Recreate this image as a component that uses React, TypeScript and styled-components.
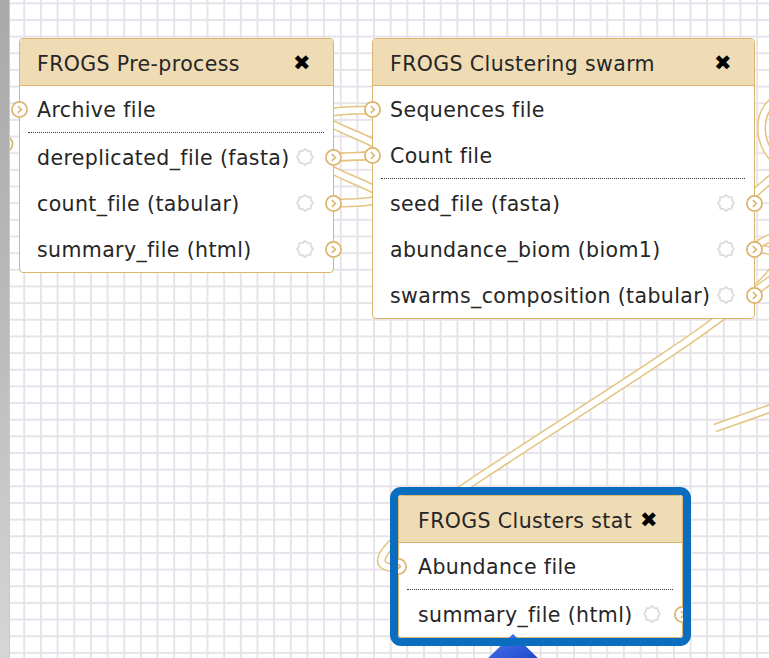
import React from "react";
import styled, { createGlobalStyle } from "styled-components";

const GlobalStyle = createGlobalStyle`
  html, body {
    margin: 0;
    padding: 0;
  }
  body {
    font-family: "DejaVu Sans", Verdana, sans-serif;
    overflow: hidden;
    background: #fff;
  }
`;

const TAN = "#dcb56c";
const WIRE = "#e4c480";
const GUTTER = 10;

interface NodeSpec {
  x: number;
  y: number;
  w: number;
  title: string;
  inputs: string[];
  outputs: string[];
  inset?: number;
  highlight?: boolean;
}

const nodes: NodeSpec[] = [
  {
    x: 19,
    y: 38,
    w: 315,
    title: "FROGS Pre-process",
    inputs: ["Archive file"],
    outputs: [
      "dereplicated_file (fasta)",
      "count_file (tabular)",
      "summary_file (html)",
    ],
  },
  {
    x: 372,
    y: 38,
    w: 383,
    title: "FROGS Clustering swarm",
    inputs: ["Sequences file", "Count file"],
    outputs: [
      "seed_file (fasta)",
      "abundance_biom (biom1)",
      "swarms_composition (tabular)",
    ],
  },
  {
    x: 398,
    y: 495,
    w: 285,
    title: "FROGS Clusters stat",
    inputs: ["Abundance file"],
    outputs: ["summary_file (html)"],
    inset: 19,
    highlight: true,
  },
];

// connector curves, in page coordinates
const wires = [
  "M 333 157 C 483 157 222 110 372 110",
  "M 333 203 C 483 203 222 156 372 156",
  "M 754 249 C 905 249 272 568 398 568",
  "M 752 196 C 758 190 764 184 775 176",
  "M 754 292 C 760 288 766 283 775 277",
  "M 756 246 C 760 243 765 240 775 236",
  "M 715 428 C 735 421 755 414 780 405",
  "M 775 100 C 758 112 756 140 775 160",
];

export default function App() {
  return (
    <>
      <GlobalStyle />
      <Page>
        <Gutter />
        <Canvas>
          <Wires viewBox={`${GUTTER} 0 759 658`}>
            {wires.map((d, i) => (
              <g key={i}>
                <path d={d} stroke={WIRE} strokeWidth={9} fill="none" />
                <path d={d} stroke="#fff" strokeWidth={6} fill="none" />
              </g>
            ))}
            <Terminal cx={5} cy={144} />
          </Wires>

          {nodes.map((n) => (
            <WorkflowNode key={n.title} {...n} />
          ))}

          <Pointer viewBox="0 0 80 30">
            <defs>
              <linearGradient id="ptr" x1="0" y1="0" x2="1" y2="1">
                <stop offset="0" stopColor="#4d7bf0" />
                <stop offset="1" stopColor="#1c44c8" />
              </linearGradient>
            </defs>
            <polygon points="43,4 14,32 72,32" fill="url(#ptr)" />
          </Pointer>
        </Canvas>
      </Page>
    </>
  );
}

function Terminal({ cx, cy }: { cx: number; cy: number }) {
  return (
    <g transform={`translate(${cx - 8.5} ${cy - 8.5})`}>
      <circle cx={8.5} cy={8.5} r={7.6} fill="#fff" stroke={TAN} strokeWidth={1.7} />
      <path d="M 6.8 5.2 L 10.4 8.5 L 6.8 11.8" fill="none" stroke={TAN} strokeWidth={1.6} />
    </g>
  );
}

function Port() {
  return (
    <PortIcon viewBox="0 0 17 17">
      <Terminal cx={8.5} cy={8.5} />
    </PortIcon>
  );
}

function Callout() {
  const pts: string[] = [];
  for (let i = 0; i < 16; i++) {
    const a = (Math.PI * 2 * i) / 16 - Math.PI / 2;
    const r = i % 2 === 0 ? 8 : 6.6;
    pts.push(`${9 + r * Math.cos(a)},${9 + r * Math.sin(a)}`);
  }
  return (
    <CalloutIcon viewBox="0 0 18 18">
      <polygon
        points={pts.join(" ")}
        fill="none"
        stroke="#dedede"
        strokeWidth={2}
        strokeLinejoin="round"
      />
    </CalloutIcon>
  );
}

function WorkflowNode({ x, y, w, title, inputs, outputs, inset = 17, highlight }: NodeSpec) {
  return (
    <Node $x={x} $y={y} $w={w} $highlight={!!highlight}>
      <Header $inset={inset}>
        <Title>{title}</Title>
        <Close>✖</Close>
      </Header>
      {inputs.map((label) => (
        <Row key={label} $inset={inset}>
          <InputPort>
            <Port />
          </InputPort>
          <Label>{label}</Label>
        </Row>
      ))}
      <Separator />
      {outputs.map((label) => (
        <Row key={label} $inset={inset}>
          <Label>{label}</Label>
          <Callout />
          <OutputPort>
            <Port />
          </OutputPort>
        </Row>
      ))}
    </Node>
  );
}

const Page = styled.div`
  display: flex;
  width: 769px;
  height: 658px;
  overflow: hidden;
`;

const Gutter = styled.div`
  flex: 0 0 ${GUTTER}px;
  background: linear-gradient(to bottom, #a9a9a9 0%, #bdbdbd 55%, #d6d6d6 100%);
  box-shadow: inset -1px 0 0 #c9c9c9;
  position: relative;
  z-index: 5;
`;

const Canvas = styled.div`
  position: relative;
  flex: 1;
  overflow: hidden;
  background-color: #fff;
  background-image: linear-gradient(to right, #e7e3ea 2px, transparent 2px),
    linear-gradient(to bottom, #e7e3ea 2px, transparent 2px);
  background-size: 16.667px 16.667px;
  background-position: 13.3px 2.3px;
`;

const Wires = styled.svg`
  position: absolute;
  left: 0;
  top: 0;
  width: 759px;
  height: 658px;
  overflow: visible;
`;

const Pointer = styled.svg`
  position: absolute;
  left: ${470 - GUTTER}px;
  top: 630px;
  width: 80px;
  height: 30px;
  z-index: 2;
`;

const Node = styled.div<{ $x: number; $y: number; $w: number; $highlight: boolean }>`
  position: absolute;
  left: ${(p) => p.$x - GUTTER}px;
  top: ${(p) => p.$y}px;
  width: ${(p) => p.$w}px;
  box-sizing: border-box;
  background: #fff;
  border: 1px solid ${TAN};
  border-radius: 4px;
  color: #262626;
  font-size: 20.5px;
  letter-spacing: 0.38px;

  ${(p) =>
    p.$highlight &&
    `
    &::after {
      content: "";
      position: absolute;
      inset: -9px;
      border: 8px solid #0a6dbf;
      border-radius: 11px;
      pointer-events: none;
      z-index: 3;
    }
  `}
`;

const Header = styled.div<{ $inset: number }>`
  display: flex;
  align-items: center;
  justify-content: space-between;
  gap: 6px;
  height: 46px;
  padding: 0 ${(p) => p.$inset + 5}px 0 ${(p) => p.$inset}px;
  background: #efdcb5;
  border-bottom: 1px solid ${TAN};
  border-radius: 3px 3px 0 0;
`;

const Title = styled.span`
  white-space: nowrap;
  padding-top: 3px;
`;

const Close = styled.span`
  font-size: 21px;
  color: #000;
  line-height: 1;
  padding-top: 2px;
`;

const Row = styled.div<{ $inset: number }>`
  position: relative;
  display: flex;
  align-items: center;
  height: 46px;
  padding: 0 ${(p) => p.$inset + 2}px 0 ${(p) => p.$inset}px;
`;

const Label = styled.span`
  flex: 1;
  white-space: nowrap;
  padding-top: 2px;
`;

const Separator = styled.div`
  margin: 0 9px 1px 8px;
  border-top: 1px dotted #3a3a3a;
`;

const PortIcon = styled.svg`
  display: block;
  width: 17px;
  height: 17px;
`;

const InputPort = styled.span`
  position: absolute;
  left: -9px;
  top: 50%;
  margin-top: -8px;
`;

const OutputPort = styled.span`
  position: absolute;
  right: -9px;
  top: 50%;
  margin-top: -8px;
`;

const CalloutIcon = styled.svg`
  flex: 0 0 18px;
  width: 18px;
  height: 18px;
`;
